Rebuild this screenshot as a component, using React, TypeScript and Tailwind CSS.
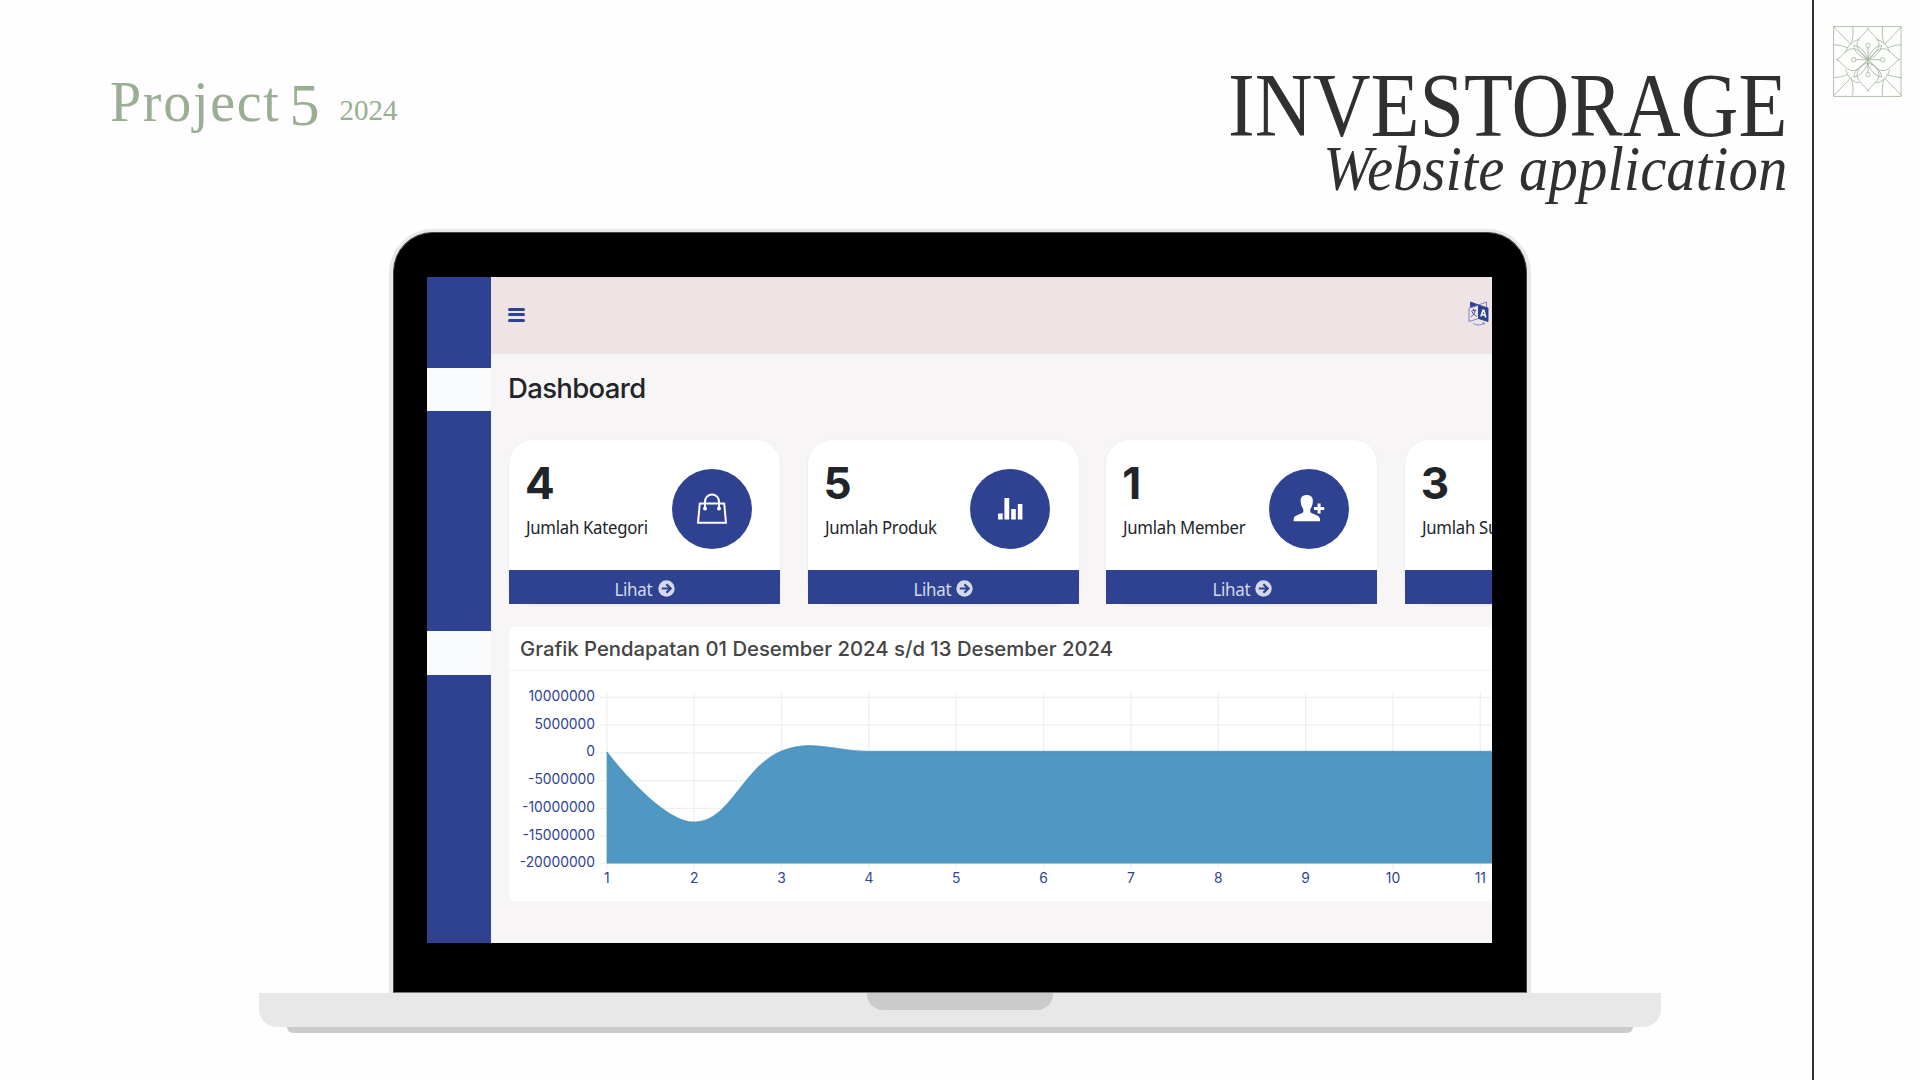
import React from "react";

const serif = "font-['Liberation_Serif',serif]";

function Ornament() {
  const petals = (
    <>
      <path d="M263 83C258 98 233 110 230 130C229 150 246 160 263 178C280 160 297 150 296 130C293 110 268 98 263 83Z" />
    </>
  );
  const corner = (
    <>
      <path d="M160 79L212 133" />
      <path d="M217 79C219 96 219 110 213 130" />
      <path d="M160 133C178 134 190 138 202 142" />
      <path d="M237 118C220 119 203 132 196 157" />
      <path d="M220 135C222 155 240 170 263 178C255 155 240 138 220 135Z" />
    </>
  );
  return (
    <svg viewBox="158 77 207 213" className="h-[71px] w-[69px]" fill="none" stroke="#9fb398" strokeWidth="2.4">
      <rect x="160" y="79" width="202" height="209" />
      {petals}
      <g transform="rotate(90 263 178)">{petals}</g>
      <g transform="rotate(180 263 178)">{petals}</g>
      <g transform="rotate(270 263 178)">{petals}</g>
      {corner}
      <g transform="translate(524 0) scale(-1 1)">{corner}</g>
      <g transform="translate(0 365) scale(1 -1)">{corner}</g>
      <g transform="translate(524 365) scale(-1 -1)">{corner}</g>
      <path d="M263 140V217M226 178H301" />
      <g fill="#fefefe">
        <circle cx="263" cy="135" r="6.5" />
        <circle cx="263" cy="223" r="6.5" />
        <circle cx="220" cy="178" r="6.5" />
        <circle cx="307" cy="178" r="6.5" />
      </g>
    </svg>
  );
}

function BagIcon() {
  return (
    <svg viewBox="0 0 32 32" className="h-8 w-8" fill="none" stroke="#fff">
      <path d="M3.8 10.5H28.2L30 29.8H2Z" strokeWidth="2" />
      <path d="M9 15V9C9 -1 23 -1 23 9V15" strokeWidth="2" />
      <circle cx="9" cy="15.5" r="2" fill="#fff" stroke="none" />
      <circle cx="23" cy="15.5" r="2" fill="#fff" stroke="none" />
    </svg>
  );
}

function BarsIcon() {
  return (
    <svg viewBox="0 0 32 32" className="h-8 w-8" fill="#fff">
      <path d="M4 20.5H8.7V26.5H4ZM10.4 5H15.2V26.5H10.4ZM17.2 16H21.8V26.5H17.2ZM23.8 11H28.4V26.5H23.8Z" />
    </svg>
  );
}

function MemberIcon() {
  return (
    <svg viewBox="0 0 32 32" className="h-8 w-8" fill="#fff">
      <path d="M13.7 2C18 2 20.3 4.6 19.8 9C19.5 12 18.8 14 17.3 16V19C18.5 21.4 26.6 21.5 27 26V28.2H0.6V26C1 21.5 9 21.4 10.3 19V16C8.8 14 8 12 7.7 9C7.2 4.6 9.4 2 13.7 2Z" />
      <path d="M24.6 10.5H27.6V14H31.2V17H27.6V20.5H24.6V17H21V14H24.6Z" />
    </svg>
  );
}

function ArrowIcon() {
  return (
    <svg viewBox="0 0 17 17" className="h-[17px] w-[17px]">
      <circle cx="8.5" cy="8.5" r="8.2" fill="#d5daea" />
      <path d="M3.8 8.5H12.4M8.4 4.2L12.7 8.5L8.4 12.8" fill="none" stroke="#2e4291" strokeWidth="2.2" />
    </svg>
  );
}

function TranslateIcon() {
  return (
    <svg viewBox="0 0 21 25" className="h-[25px] w-[21px]" fill="none" stroke="#6c7ab3" strokeWidth="0.9">
      <path d="M2.5 5.5V1L10.5 4L2.5 6.5Z" fill="#2e4291" stroke="#2e4291" />
      <path d="M10.5 4L18.5 1V6" />
      <path d="M1 7L10.5 4V17.5L1 20.5Z" />
      <path d="M10.5 4L20 7V20.5L10.5 17.5Z" fill="#2e4291" stroke="#2e4291" />
      <path d="M3.2 10.2L8.2 9M5.2 7.8L6 9.6M7.2 9.4C6.6 12.5 5 14.5 3 15.8M4.2 11C5.5 13.5 7 14.6 8.8 15.2" stroke="#2e4291" />
      <path d="M12.9 15.5L15 9.3H15.8L17.8 16.5M13.6 13.5L17.1 14.3" stroke="#fff" strokeWidth="1.5" />
      <path d="M5 22.3C8 24.5 13 24.5 16 22.3M14.2 21.8H16.2V23.5" />
    </svg>
  );
}

type CardProps = { value: string; label: string; icon?: React.ReactNode };

function StatCard({ value, label, icon }: CardProps) {
  return (
    <div className="h-[164px] w-[271px] shrink-0 rounded-t-[24px] rounded-b-[24px] bg-white shadow-[0_1px_3px_rgba(0,0,0,0.08)]">
      <div className="flex h-[130px] justify-between pl-[16px] pr-[28.5px]">
        <div className="w-[140px] whitespace-nowrap pt-[16px]">
          <div className="font-['Inter',sans-serif] text-[44px] leading-[54px] font-bold text-[#212529]">{value}</div>
          <div className="ml-px origin-left scale-x-[0.93] pt-[5px] font-['Noto_Sans',sans-serif] text-[18px] leading-6 tracking-[-0.3px] text-[#212529]">
            {label}
          </div>
        </div>
        <div className="mt-[29px] flex h-20 w-20 shrink-0 items-center justify-center rounded-full bg-[#2e4291]">{icon}</div>
      </div>
      <div className="flex h-[34px] items-center justify-center gap-[5px] bg-[#2e4291] pt-[3px] font-['Noto_Sans',sans-serif] text-[18px] leading-6 tracking-[-0.3px] text-[#d5daea]">
        <span className="-ml-[2px] origin-right scale-x-[0.94]">Lihat</span>
        <ArrowIcon />
      </div>
    </div>
  );
}

const yTicks = ["10000000", "5000000", "0", "-5000000", "-10000000", "-15000000", "-20000000"];
const xTicks = ["1", "2", "3", "4", "5", "6", "7", "8", "9", "10", "11"];

function RevenueChart() {
  return (
    <svg viewBox="509 671 983 230" className="block h-[230px] w-[983px]">
      <g stroke="#efefef" strokeWidth="1.3">
        {yTicks.map((t, i) => (
          <line key={t} x1="600" x2="1492" y1={697.5 + i * 27.7} y2={697.5 + i * 27.7} />
        ))}
        {xTicks.map((t, i) => (
          <line key={t} x1={606.8 + i * 87.35} x2={606.8 + i * 87.35} y1="693" y2="869" />
        ))}
      </g>
      <path
        d="M606.7 752C606.7 752 660 823 694.9 822.3C730 822 743 767 781.8 751.2C812 738.5 834 751.6 868.8 751.6H1492V863.5H606.7Z"
        fill="#3c8dbc"
        fillOpacity="0.9"
      />
      <path
        d="M606.7 752C606.7 752 660 823 694.9 822.3C730 822 743 767 781.8 751.2C812 738.5 834 751.6 868.8 751.6H1492"
        fill="none"
        stroke="#3c8dbc"
        strokeOpacity="0.7"
        strokeWidth="1.5"
      />
      <g fill="#2e4291" className="font-['Inter',sans-serif] text-[13.8px]">
        {yTicks.map((t, i) => (
          <text key={t} x="595" y={701 + i * 27.7} textAnchor="end">{t}</text>
        ))}
        {xTicks.map((t, i) => (
          <text key={t} x={606.8 + i * 87.35} y="883.4" textAnchor="middle">{t}</text>
        ))}
      </g>
    </svg>
  );
}

function Dashboard() {
  return (
    <div className="flex h-[666px] w-[1065px] overflow-hidden bg-[#f7f5f6]">
      <div className="flex w-16 shrink-0 flex-col bg-[#2e4291]">
        <div className="mt-[91px] h-[43px] bg-[#f8fafc]" />
        <div className="mt-[220px] h-[44px] bg-[#f8fafc]" />
      </div>
      <div className="w-[1001px] shrink-0">
        <div className="flex h-[77px] items-start justify-between bg-[#eee4e6] pl-[17px] pr-[3px]">
          <div className="mt-[31px] flex w-[17px] flex-col gap-[2.7px]">
            <div className="h-[2.8px] rounded-full bg-[#2e4291]" />
            <div className="h-[2.8px] rounded-full bg-[#2e4291]" />
            <div className="h-[2.8px] rounded-full bg-[#2e4291]" />
          </div>
          <div className="mt-[24px]">
            <TranslateIcon />
          </div>
        </div>
        <div className="pl-[18px]">
          <h1 className="-ml-px h-[86px] pt-[16px] font-['Inter',sans-serif] text-[27.5px] leading-[36px] font-medium tracking-[-0.65px] text-[#212529]">Dashboard</h1>
          <div className="flex gap-[27.6px]">
            <StatCard value="4" label="Jumlah Kategori" icon={<BagIcon />} />
            <StatCard value="5" label="Jumlah Produk" icon={<BarsIcon />} />
            <StatCard value="1" label="Jumlah Member" icon={<MemberIcon />} />
            <StatCard value="3" label="Jumlah Supplier" />
          </div>
          <div className="mt-[23px] h-[274px] w-[1100px] rounded-[5px] bg-white">
            <div className="h-[44px] border-b border-[#f0f0f0] pl-[11px] font-['Inter',sans-serif] text-[20.3px] leading-[44px] font-medium whitespace-nowrap text-[#444]">
              Grafik Pendapatan 01 Desember 2024 s/d 13 Desember 2024
            </div>
            <RevenueChart />
          </div>
        </div>
      </div>
    </div>
  );
}

export default function App() {
  return (
    <div className="flex h-[1080px] w-[1920px] overflow-hidden bg-[#fefefe]">
      <div className="w-[1812px] shrink-0">
        <header className={`flex h-[229px] justify-between pl-[110px] pr-[25px] ${serif}`}>
          <div className="flex items-baseline gap-[20px] pt-[73px] leading-none text-[#9aae93]">
            <div className="text-[56px] leading-[56px]">
              <span className="tracking-[1.7px]">Project</span>
              <span className="relative top-[4px] ml-[9px] text-[60px] leading-[56px]">5</span>
            </div>
            <div className="relative -top-px text-[29px]">2024</div>
          </div>
          <div className="flex flex-col items-end pt-[68px] text-[#303030]">
            <div className="origin-right scale-x-[0.89] text-[90px] leading-[76px]">INVESTORAGE</div>
            <div className="origin-right scale-x-[0.935] text-[63px] leading-[50px] italic">Website application</div>
          </div>
        </header>
        <div className="ml-[389px] h-[764px] w-[1142px] rounded-t-[44px] bg-[#e8e8e8] px-1 pt-[3px]">
          <div className="h-[761px] rounded-t-[40px] border border-[#444] border-b-[#777] bg-black pt-[44px] pl-[33px]">
            <Dashboard />
          </div>
        </div>
        <div className="ml-[259px] flex h-[34px] w-[1402px] justify-center rounded-b-[18px] bg-[#e8e8e8]">
          <div className="h-[17px] w-[186px] rounded-b-[16px] bg-[#cbcbcb]" />
        </div>
        <div className="ml-[287px] h-[6px] w-[1346px] rounded-b-[6px] bg-[#cbcbcb]" />
      </div>
      <div className="w-[2px] bg-[#303030]" />
      <div className="pt-[26px] pl-[19px]">
        <Ornament />
      </div>
    </div>
  );
}
